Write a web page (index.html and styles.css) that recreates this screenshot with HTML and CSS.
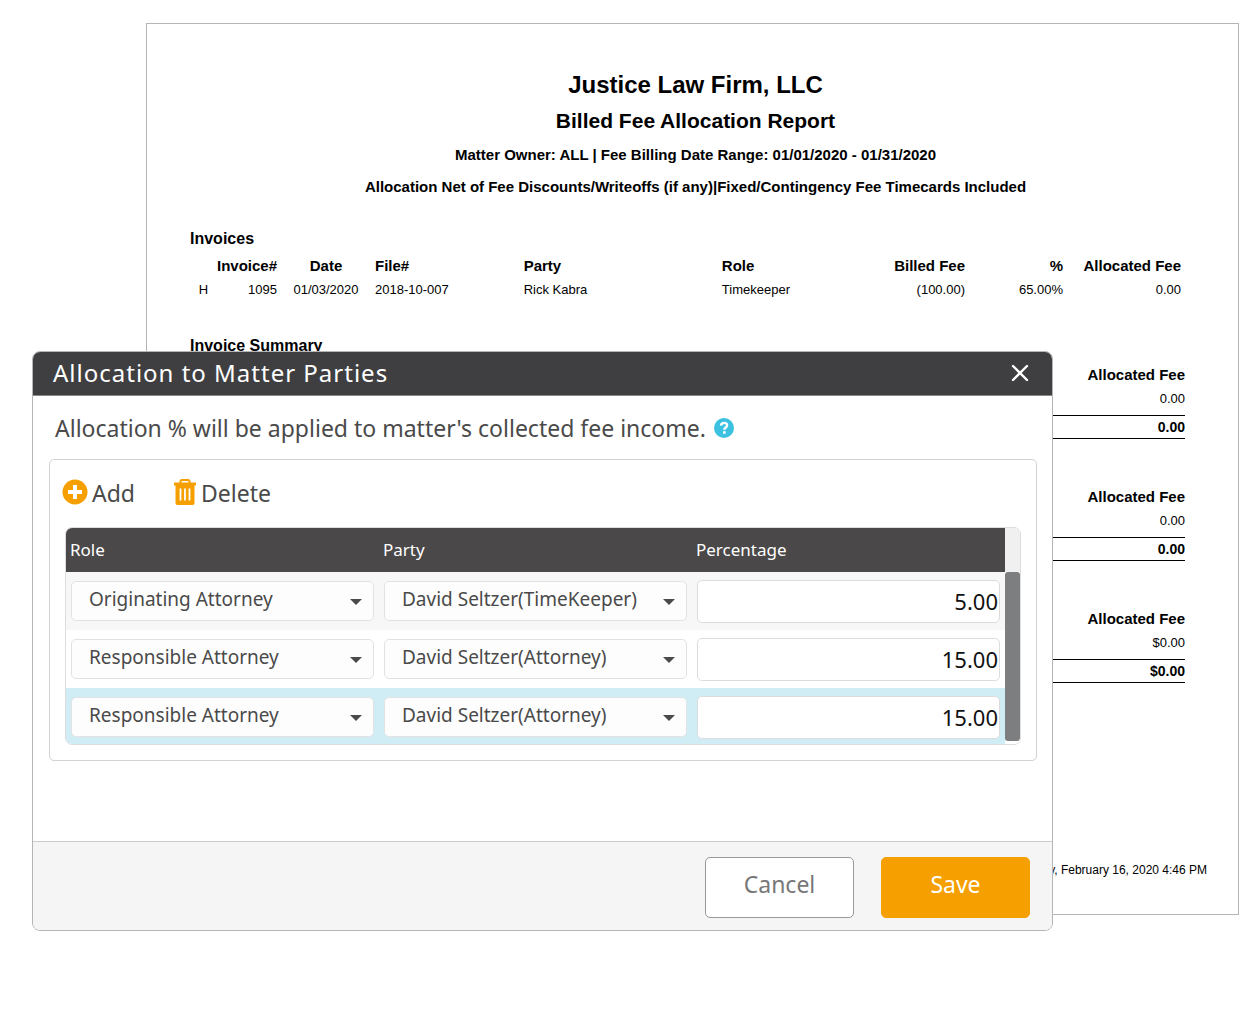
FILE: index.html
```html
<!DOCTYPE html>
<html lang="en">
<head>
    <meta charset="UTF-8">
    <meta name="viewport" content="width=device-width, initial-scale=1.0">
    <title>Allocation to Matter Parties</title>
    <link rel="stylesheet" href="styles.css">
</head>
<body>
    <main class="report">
        <header class="report-header">
            <h1>Justice Law Firm, LLC</h1>
            <h2>Billed Fee Allocation Report</h2>
            <p>Matter Owner: ALL | Fee Billing Date Range: 01/01/2020 - 01/31/2020</p>
            <p>Allocation Net of Fee Discounts/Writeoffs (if any)|Fixed/Contingency Fee Timecards Included</p>
        </header>

        <h3>Invoices</h3>
        <table class="invoices">
            <thead>
                <tr>
                    <th class="col-flag"></th>
                    <th class="col-invoice right">Invoice#</th>
                    <th class="col-date center">Date</th>
                    <th class="col-file">File#</th>
                    <th class="col-party">Party</th>
                    <th>Role</th>
                    <th class="col-billed right">Billed Fee</th>
                    <th class="col-percent right">%</th>
                    <th class="col-allocated right">Allocated Fee</th>
                </tr>
            </thead>
            <tbody>
                <tr>
                    <td class="center">H</td>
                    <td class="right">1095</td>
                    <td class="center">01/03/2020</td>
                    <td>2018-10-007</td>
                    <td>Rick Kabra</td>
                    <td>Timekeeper</td>
                    <td class="right">(100.00)</td>
                    <td class="right">65.00%</td>
                    <td class="right">0.00</td>
                </tr>
            </tbody>
        </table>

        <h3>Invoice Summary</h3>
        <div class="summaries">
            <table class="summary">
                <thead><tr><th>Allocated Fee</th></tr></thead>
                <tbody><tr><td>0.00</td></tr></tbody>
                <tfoot><tr><td>0.00</td></tr></tfoot>
            </table>
            <table class="summary">
                <thead><tr><th>Allocated Fee</th></tr></thead>
                <tbody><tr><td>0.00</td></tr></tbody>
                <tfoot><tr><td>0.00</td></tr></tfoot>
            </table>
            <table class="summary">
                <thead><tr><th>Allocated Fee</th></tr></thead>
                <tbody><tr><td>$0.00</td></tr></tbody>
                <tfoot><tr><td>$0.00</td></tr></tfoot>
            </table>
        </div>

        <footer class="report-footer">Sunday, February 16, 2020 4:46 PM</footer>
    </main>

    <div class="modal" role="dialog" aria-labelledby="modalTitle">
        <div class="modal-header">
            <h2 id="modalTitle">Allocation to Matter Parties</h2>
            <button class="close" id="closeModal" aria-label="Close">
                <svg width="18" height="18" viewBox="0 0 18 18"><path d="M2 2l14 14M16 2L2 16" fill="none" stroke="#fff" stroke-width="2.4" stroke-linecap="round"/></svg>
            </button>
        </div>

        <div class="modal-body">
            <p class="intro">
                Allocation % will be applied to matter's collected fee income.
                <svg class="help" width="20" height="20" viewBox="0 0 20 20">
                    <circle cx="10" cy="10" r="10" fill="#3cc1e0"/>
                    <path d="M7 7.6C7.2 5.7 8.4 4.9 10.1 4.9c1.8 0 3 .9 3 2.5 0 2.1-2.8 2.1-2.8 4.3" fill="none" stroke="#fff" stroke-width="2.4"/>
                    <rect x="9" y="13.2" width="2.6" height="2.5" fill="#fff"/>
                </svg>
            </p>

            <div class="panel">
                <div class="toolbar">
                    <button class="tool" type="button">
                        <svg width="26" height="26" viewBox="0 0 26 26">
                            <circle cx="13" cy="13" r="12.5" fill="#f59f00"/>
                            <path d="M13 6v14M6 13h14" stroke="#fff" stroke-width="4"/>
                        </svg>
                        Add
                    </button>
                    <button class="tool" type="button">
                        <svg width="24" height="26" viewBox="0 0 24 26">
                            <path d="M7.5 4V2.5A1.5 1.5 0 0 1 9 1h6a1.5 1.5 0 0 1 1.5 1.5V4" fill="none" stroke="#f59f00" stroke-width="2"/>
                            <path d="M1 3.5h22v3h-1.5V24a2 2 0 0 1-2 2h-15a2 2 0 0 1-2-2V6.500H1z" fill="#f59f00"/>
                            <path d="M7.5 9.5v12M12 9.5v12M16.5 9.5v12" stroke="#fff" stroke-width="1.8"/>
                        </svg>
                        Delete
                    </button>
                </div>

                <div class="grid-box">
                    <table class="grid">
                        <thead>
                            <tr>
                                <th>Role</th>
                                <th>Party</th>
                                <th>Percentage</th>
                            </tr>
                        </thead>
                        <tbody>
                            <tr>
                                <td><span class="select"><select aria-label="Role"><option>Originating Attorney</option><option>Responsible Attorney</option></select></span></td>
                                <td><span class="select"><select aria-label="Party"><option>David Seltzer(TimeKeeper)</option><option>David Seltzer(Attorney)</option></select></span></td>
                                <td><input type="text" aria-label="Percentage" value="5.00"></td>
                            </tr>
                            <tr>
                                <td><span class="select"><select aria-label="Role"><option>Responsible Attorney</option><option>Originating Attorney</option></select></span></td>
                                <td><span class="select"><select aria-label="Party"><option>David Seltzer(Attorney)</option><option>David Seltzer(TimeKeeper)</option></select></span></td>
                                <td><input type="text" aria-label="Percentage" value="15.00"></td>
                            </tr>
                            <tr class="selected">
                                <td><span class="select"><select aria-label="Role"><option>Responsible Attorney</option><option>Originating Attorney</option></select></span></td>
                                <td><span class="select"><select aria-label="Party"><option>David Seltzer(Attorney)</option><option>David Seltzer(TimeKeeper)</option></select></span></td>
                                <td><input type="text" aria-label="Percentage" value="15.00"></td>
                            </tr>
                        </tbody>
                    </table>
                    <div class="scrollbar"><div class="thumb"></div></div>
                </div>
            </div>
        </div>

        <div class="modal-footer">
            <button class="btn" id="cancelButton" type="button">Cancel</button>
            <button class="btn btn-primary" id="saveButton" type="button">Save</button>
        </div>
    </div>

    <script>
        function hideModal() {
            document.querySelector('.modal').style.display = 'none';
        }

        document.getElementById('closeModal').onclick = hideModal;
        document.getElementById('cancelButton').onclick = hideModal;
        document.getElementById('saveButton').onclick = hideModal;
    </script>
</body>
</html>
```
FILE: styles.css
```css
* {
    box-sizing: border-box;
}

body {
    display: flow-root;
    position: relative;
    margin: 0;
    background-color: #fff;
    color: #000;
    font-family: "Liberation Sans", Arial, sans-serif;
}

/* Report page */
.report {
    margin: 23px 11px 40px 146px;
    padding: 45px 57px 36px 43px;
    border: 1px solid #b5b5b5;
}

.report-header {
    margin: 0 -20px 30px 0;
    text-align: center;
}

.report h1 {
    margin: 0 0 8px;
    font-size: 24px;
    line-height: 32px;
}

.report h2 {
    margin: 0 0 12px;
    font-size: 21px;
    line-height: 24px;
}

.report-header p {
    margin: 0 0 12px;
    font-size: 15px;
    font-weight: bold;
    line-height: 20px;
}

.report h3 {
    margin: 0;
    font-size: 16px;
    line-height: 24px;
}

.report table {
    width: 100%;
    border-collapse: collapse;
    font-size: 13px;
    line-height: 24px;
}

.report th {
    padding: 0;
    font-size: 15px;
    text-align: left;
}

.report td {
    padding: 0;
}

.report .right {
    text-align: right;
}

.report .center {
    text-align: center;
}

.report .invoices {
    table-layout: fixed;
    margin: 3px 0 32px;
}

.col-flag { width: 27px; }
.col-invoice { width: 60px; }
.col-date { width: 98px; }
.col-file { width: 15%; }
.col-party { width: 20%; }
.col-billed { width: 100px; }
.col-percent { width: 98px; }
.col-allocated { width: 118px; }

.summaries {
    display: flex;
    flex-direction: column;
    gap: 46px;
    margin: 5px -4px 0 0;
}

.report .summary th,
.report .summary td {
    text-align: right;
}

.summary tbody td {
    padding-bottom: 4px;
}

.report .summary tfoot td {
    border-top: 1px solid #000;
    border-bottom: 1px solid #000;
    font-size: 14px;
    font-weight: bold;
    line-height: 22px;
}

.report-footer {
    margin: 179px -26px 0 0;
    font-size: 12px;
    line-height: 16px;
    text-align: right;
}

/* Allocation dialog */
.modal {
    position: absolute;
    top: 351px;
    left: 32px;
    right: 197px;
    border: 1px solid #b5b5b5;
    border-radius: 8px;
    overflow: hidden;
    background-color: #fff;
    color: #4a4a4a;
    font-family: "Noto Sans", "Open Sans", sans-serif;
}

.modal-header {
    display: flex;
    align-items: center;
    justify-content: space-between;
    height: 44px;
    padding: 0 23px 2px 20px;
    border-bottom: 1px solid #8a8a8a;
    background-color: #3f3f41;
    color: #fff;
}

.modal-header h2 {
    margin: 0;
    font-size: 24px;
    font-weight: normal;
    letter-spacing: 1px;
}

.close {
    display: flex;
    padding: 0;
    border: none;
    background: none;
    cursor: pointer;
}

.modal-body {
    padding: 16px 15px 80px 16px;
}

.intro {
    display: flex;
    align-items: center;
    gap: 8px;
    margin: 0 0 15px 6px;
    font-size: 23px;
    line-height: 32px;
}

.panel {
    padding: 17px 15px 15px;
    border: 1px solid #d2d2d2;
    border-radius: 5px;
}

.toolbar {
    display: flex;
    gap: 38px;
    margin: 0 0 18px -3px;
}

.tool {
    display: flex;
    align-items: center;
    gap: 4px;
    padding: 0;
    border: none;
    background: none;
    color: #4a4a4a;
    font-family: inherit;
    font-size: 23px;
    line-height: 32px;
    cursor: pointer;
}

.tool svg {
    margin-bottom: 3px;
}

.grid-box {
    display: flex;
    border: 1px solid #ddd;
    border-radius: 7px;
    overflow: hidden;
}

.grid {
    width: 100%;
    table-layout: fixed;
    border-collapse: collapse;
}

.grid th {
    height: 44px;
    padding: 0 4px 2px;
    background-color: #4a4848;
    color: #fff;
    font-size: 17px;
    font-weight: normal;
    text-align: left;
}

.grid td {
    height: 58px;
    padding: 0 5px;
}

.grid tbody tr:first-child {
    background-color: #f7f7f7;
}

.grid tbody .selected {
    background-color: #d0edf5;
}

.grid tbody tr:last-child td {
    height: 56px;
    padding-top: 2px;
}

.select {
    display: block;
    position: relative;
}

.select::after {
    content: "";
    position: absolute;
    top: 18px;
    right: 12px;
    border: 6px solid transparent;
    border-top-color: #4a4a4a;
    border-bottom: none;
    pointer-events: none;
}

.select select {
    display: block;
    appearance: none;
    width: 100%;
    height: 40px;
    padding: 0 32px 5px 17px;
    border: 1px solid #e2e2e2;
    border-radius: 5px;
    background-color: #fdfdfd;
    color: #4a4a4a;
    font-family: inherit;
    font-size: 19px;
}

.grid input {
    display: block;
    width: 100%;
    height: 43px;
    padding: 0 1px;
    border: 1px solid #dcdcdc;
    border-radius: 5px;
    background-color: #fff;
    color: #111;
    font-family: inherit;
    font-size: 22px;
    text-align: right;
}

.scrollbar {
    flex: 0 0 15px;
    padding: 44px 0 3px;
    background: linear-gradient(#f0f0f0 44px, #fff 44px);
}

.thumb {
    height: 100%;
    border-radius: 3px;
    background-color: #7c7e80;
}

.modal-footer {
    display: flex;
    justify-content: flex-end;
    gap: 27px;
    padding: 15px 22px 12px;
    border-top: 1px solid #ccc;
    background-color: #f5f5f5;
}

.btn {
    width: 149px;
    height: 61px;
    padding: 0 0 8px;
    border: 1px solid #999;
    border-radius: 5px;
    background-color: #fff;
    color: #777;
    font-family: inherit;
    font-size: 23px;
    cursor: pointer;
}

.btn-primary {
    border-color: #f59f00;
    background-color: #f59f00;
    color: #fff;
}
```
